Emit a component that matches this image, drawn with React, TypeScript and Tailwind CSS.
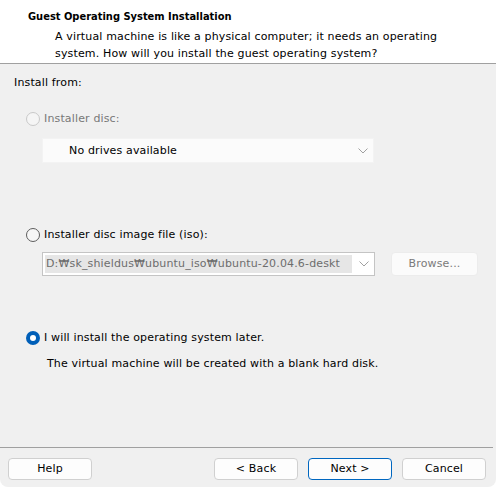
import React from 'react';

function Radio({ state }: { state: 'disabled' | 'off' | 'on' }) {
  if (state === 'on') {
    return (
      <span className="flex h-[14px] w-[14px] shrink-0 items-center justify-center rounded-full bg-[#005fb8]">
        <span className="h-[6px] w-[6px] rounded-full bg-white" />
      </span>
    );
  }
  return (
    <span
      className={
        state === 'disabled'
          ? 'h-[14px] w-[14px] shrink-0 rounded-full border border-[#c9c9c9] bg-[#f5f5f5]'
          : 'h-[14px] w-[14px] shrink-0 rounded-full border border-[#5d5d5d] bg-[#f7f7f7]'
      }
    />
  );
}

function Chevron() {
  return (
    <svg width="10" height="6" viewBox="0 0 10 6" className="shrink-0">
      <path d="M0.5 0.5 L5 5 L9.5 0.5" fill="none" stroke="#a0a0a0" strokeWidth="1" />
    </svg>
  );
}

function Button({ label, primary }: { label: string; primary?: boolean }) {
  return (
    <button
      className={
        primary
          ? 'flex h-[22px] w-[84px] items-center justify-center rounded-[4px] border border-[#0067c0] bg-[#fdfdfd] text-black'
          : 'flex h-[22px] w-[84px] items-center justify-center rounded-[4px] border border-[#d0d0d0] bg-[#fdfdfd] text-black'
      }
    >
      {label}
    </button>
  );
}

export default function App() {
  return (
    <div className="min-h-screen bg-white font-['DejaVu_Sans','Liberation_Sans',sans-serif] text-[11px] leading-4 tracking-[0.15px] text-black">
      <div className="flex h-[487px] w-[496px] flex-col overflow-hidden rounded-b-[8px] bg-[#f0f0f0]">
        {/* header */}
        <div className="h-[64px] shrink-0 border-b border-[#a0a0a0] bg-white pt-[9px]">
          <div className="pl-[28px] font-['DejaVu_Sans_Condensed','Liberation_Sans',sans-serif] font-bold tracking-normal">
            Guest Operating System Installation
          </div>
          <div className="mt-[4px] pl-[55px] leading-[16.5px]">
            A virtual machine is like a physical computer; it needs an operating
            <br />
            system. How will you install the guest operating system?
          </div>
        </div>

        {/* body */}
        <div className="flex flex-1 flex-col">
          <div className="mt-[11px] pl-[14px]">Install from:</div>

          <div className="mt-[20px] flex items-center gap-[4px] pl-[26px] text-[#787878]">
            <Radio state="disabled" />
            <span>Installer disc:</span>
          </div>
          <div className="ml-[42px] mt-[11px] flex h-[25px] w-[332px] items-center justify-between border border-[#f3f3f3] bg-[#fbfbfb] pl-[26px] pr-[5px]">
            <span>No drives available</span>
            <Chevron />
          </div>

          <div className="mt-[64px] flex items-center gap-[4px] pl-[26px]">
            <Radio state="off" />
            <span>Installer disc image file (iso):</span>
          </div>
          <div className="ml-[42px] mt-[9px] flex items-center">
            <div className="flex h-[24px] w-[333px] items-center justify-between border border-[#c4c4c4] bg-white pl-[2px] pr-[5px]">
              <div className="flex h-[18px] w-[307px] items-center overflow-hidden whitespace-nowrap bg-[#e6e6e6] pl-[1px] text-[#6d6d6d]">
                D:₩sk_shieldus₩ubuntu_iso₩ubuntu-20.04.6-deskt
              </div>
              <Chevron />
            </div>
            <div className="ml-[16px] flex h-[24px] w-[87px] items-center justify-center rounded-[4px] border border-[#ececec] bg-[#fbfbfb] text-[#7a7a7a]">
              Browse...
            </div>
          </div>

          <div className="mt-[54px] flex items-center gap-[4px] pl-[26px]">
            <Radio state="on" />
            <span>I will install the operating system later.</span>
          </div>
          <div className="mt-[10px] pl-[47px]">
            The virtual machine will be created with a blank hard disk.
          </div>
        </div>

        {/* footer */}
        <div className="mr-[3px] h-px shrink-0 bg-[#a0a0a0]" />
        <div className="flex h-[39px] shrink-0 items-start pl-[8px] pt-[10px]">
          <Button label="Help" />
          <div className="ml-[122px] flex gap-[10px]">
            <Button label="< Back" />
            <Button label="Next >" primary />
            <Button label="Cancel" />
          </div>
        </div>
      </div>
    </div>
  );
}
